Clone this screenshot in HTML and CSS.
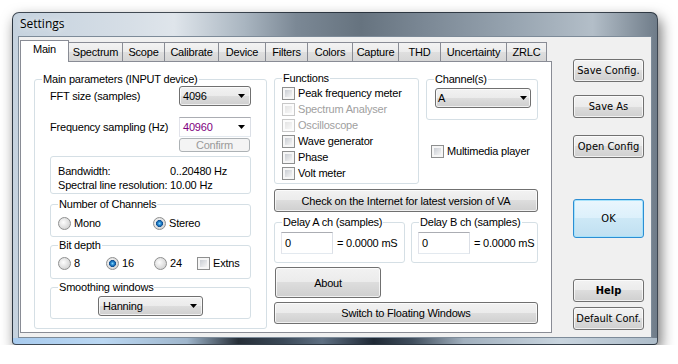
FILE: index.html
```html
<!DOCTYPE html>
<html lang="en">
<head>
    <meta charset="UTF-8">
    <meta name="viewport" content="width=device-width, initial-scale=1.0">
    <title>Settings</title>
    <link rel="stylesheet" href="styles.css">
</head>
<body>
    <div class="window">
        <div class="titlebar">Settings</div>
        <div class="client">
            <div class="tabarea">
                <div class="tabs">
                    <div class="tab active t-main">Main</div>
                    <div class="tab t-spectrum">Spectrum</div>
                    <div class="tab t-scope">Scope</div>
                    <div class="tab t-calibrate">Calibrate</div>
                    <div class="tab t-device">Device</div>
                    <div class="tab t-filters">Filters</div>
                    <div class="tab t-colors">Colors</div>
                    <div class="tab t-capture">Capture</div>
                    <div class="tab t-thd">THD</div>
                    <div class="tab t-unc">Uncertainty</div>
                    <div class="tab t-zrlc">ZRLC</div>
                </div>
                <div class="panel">
                    <fieldset class="group main-params">
                        <legend>Main parameters (INPUT device)</legend>
                        <div class="main-body">
                            <div class="param-row">
                                <span>FFT size (samples)</span>
                                <div class="combo look fft">
                                    <span>4096</span>
                                    <svg class="arrow" width="7" height="4" viewBox="0 0 7 4"><path d="M0 0h7L3.5 4z"/></svg>
                                </div>
                            </div>
                            <div class="param-row freq-row">
                                <span>Frequency sampling (Hz)</span>
                                <div class="combo edit fft">
                                    <span class="purple">40960</span>
                                    <svg class="arrow" width="7" height="4" viewBox="0 0 7 4"><path d="M0 0h7L3.5 4z"/></svg>
                                </div>
                            </div>
                            <div class="confirm-row">
                                <button class="btn disabled confirm">Confirm</button>
                            </div>
                            <div class="info-box">
                                <span>Bandwidth:</span><span>0..20480 Hz</span>
                                <span>Spectral line resolution:</span><span>10.00 Hz</span>
                            </div>
                            <fieldset class="group sub channels">
                                <legend>Number of Channels</legend>
                                <div class="opts ch-opts">
                                    <div class="opt w-mono"><span class="radio"></span>Mono</div>
                                    <div class="opt"><span class="radio on"></span>Stereo</div>
                                </div>
                            </fieldset>
                            <fieldset class="group sub bits">
                                <legend>Bit depth</legend>
                                <div class="opts bit-opts">
                                    <div class="opt w-bit"><span class="radio"></span>8</div>
                                    <div class="opt w-bit"><span class="radio on"></span>16</div>
                                    <div class="opt w-24"><span class="radio"></span>24</div>
                                    <div class="opt"><span class="chk"></span>Extns</div>
                                </div>
                            </fieldset>
                            <fieldset class="group sub smoothing">
                                <legend>Smoothing windows</legend>
                                <div class="smooth-body">
                                    <div class="combo look hanning">
                                        <span>Hanning</span>
                                        <svg class="arrow" width="7" height="4" viewBox="0 0 7 4"><path d="M0 0h7L3.5 4z"/></svg>
                                    </div>
                                </div>
                            </fieldset>
                        </div>
                    </fieldset>

                    <div class="middle">
                        <div class="top-row">
                            <fieldset class="group functions">
                                <legend>Functions</legend>
                                <div class="fn-body">
                                    <div class="opt fn"><span class="chk"></span>Peak frequency meter</div>
                                    <div class="opt fn off"><span class="chk dis"></span>Spectrum Analyser</div>
                                    <div class="opt fn off"><span class="chk dis"></span>Oscilloscope</div>
                                    <div class="opt fn"><span class="chk"></span>Wave generator</div>
                                    <div class="opt fn"><span class="chk"></span>Phase</div>
                                    <div class="opt fn"><span class="chk"></span>Volt meter</div>
                                </div>
                            </fieldset>
                            <div class="chan-col">
                                <fieldset class="group chan">
                                    <legend>Channel(s)</legend>
                                    <div class="chan-body">
                                        <div class="combo look chan-combo">
                                            <span>A</span>
                                            <svg class="arrow" width="7" height="4" viewBox="0 0 7 4"><path d="M0 0h7L3.5 4z"/></svg>
                                        </div>
                                    </div>
                                </fieldset>
                                <div class="opt multimedia"><span class="chk"></span>Multimedia player</div>
                            </div>
                        </div>
                        <button class="btn wide check">Check on the Internet for latest version of VA</button>
                        <div class="delay-row">
                            <fieldset class="group delay delay-a">
                                <legend>Delay A ch (samples)</legend>
                                <div class="delay-body">
                                    <div class="textbox">0</div>
                                    <span class="ms">= 0.0000 mS</span>
                                </div>
                            </fieldset>
                            <fieldset class="group delay delay-b">
                                <legend>Delay B ch (samples)</legend>
                                <div class="delay-body">
                                    <div class="textbox">0</div>
                                    <span class="ms">= 0.0000 mS</span>
                                </div>
                            </fieldset>
                        </div>
                        <button class="btn about">About</button>
                        <button class="btn wide switch">Switch to Floating Windows</button>
                    </div>
                </div>
            </div>

            <div class="side">
                <button class="btn sb">Save Config.</button>
                <button class="btn sb save-as">Save As</button>
                <button class="btn sb open">Open Config</button>
                <button class="btn sb ok">OK</button>
                <button class="btn sb help">Help</button>
                <button class="btn sb defaults">Default Conf.</button>
            </div>
        </div>
    </div>
</body>
</html>
```

FILE: styles.css
```css
body {
    margin: 0;
    background-color: #fff;
    font-family: "Liberation Sans", Arial, sans-serif;
    font-size: 11px;
    letter-spacing: -0.2px;
    color: #000;
}

/* window frame */
.window {
    box-sizing: border-box;
    width: 646px;
    height: 333px;
    margin: 12px 0 0 12px;
    padding: 0 5px 6px;
    border: 1px solid rgba(28, 36, 46, 0.8);
    border-radius: 7px 7px 4px 4px;
    background:
        linear-gradient(90deg, #a8cbee 0%, #bad7f2 14%, #9fb6cc 27%, #262e37 35%, #3b4958 42%, #5e6f82 48%, #1f2935 56%, #404e5d 62%, #a1b0be 70%, #c8d4de 85%, #aebdca 100%) left bottom / 100% 6px no-repeat,
        linear-gradient(90deg, #c5d2de 0%, #d6dee6 18%, #dfe5eb 25%, #a9b5c0 36%, #7b8895 44%, #66737f 54%, #7b8895 64%, #98a5b1 78%, #b3bec8 90%, #6f7c89 100%);
    box-shadow: 3px 6px 14px rgba(0, 0, 0, 0.55);
}

.titlebar {
    height: 23px;
    line-height: 21px;
    padding-left: 2px;
    font-family: "Open Sans", "Noto Sans", sans-serif;
    font-size: 12px;
    letter-spacing: 0;
    text-shadow: 0 0 6px rgba(255, 255, 255, 0.9);
}

.client {
    box-sizing: border-box;
    width: 634px;
    height: 302px;
    border: 1px solid #7d8b99;
    background-color: #f0f0f0;
    display: flex;
    padding: 3px 0 0 1px;
}

/* tabs */
.tabarea {
    width: 532px;
    display: flex;
    flex-direction: column;
}

.tabs {
    display: flex;
    align-items: flex-end;
    height: 21px;
}

.tab {
    box-sizing: border-box;
    height: 19px;
    margin-left: -1px;
    padding-top: 1px;
    line-height: 17px;
    text-align: center;
    border: 1px solid #898c95;
    border-bottom: none;
    background: linear-gradient(#f3f3f3, #ebebeb 50%, #dfdfdf 50%, #d6d6d6);
}

.tab.active {
    height: 22px;
    margin-left: 0;
    margin-bottom: -1px;
    padding-top: 0;
    background: #fff;
    position: relative;
    z-index: 1;
}

.t-main { width: 49px; }
.t-spectrum { width: 55px; }
.t-scope { width: 43px; }
.t-calibrate { width: 55px; }
.t-device { width: 48px; }
.t-filters { width: 43px; }
.t-colors { width: 46px; }
.t-capture { width: 47px; }
.t-thd { width: 43px; }
.t-unc { width: 67px; }
.t-zrlc { width: 41px; }

.panel {
    box-sizing: border-box;
    height: 272px;
    border: 1px solid #898c95;
    background-color: #fff;
    display: flex;
    align-items: flex-start;
    gap: 7px;
    padding: 10px 0 0 13px;
}

/* group boxes */
.group {
    margin: 0;
    padding: 0;
    min-width: 0;
    border: 1px solid #d5dfe5;
    border-radius: 3px;
}

.group legend {
    margin-left: 7px;
    padding: 0 1px;
    line-height: 13px;
}

.main-params {
    box-sizing: border-box;
    width: 233px;
    margin-top: 1px;
}

.main-body {
    padding: 0 15px 9px;
}

.param-row {
    display: flex;
    justify-content: space-between;
    align-items: center;
    height: 20px;
}

.freq-row {
    margin-top: 11px;
}

.confirm-row {
    display: flex;
    justify-content: flex-end;
    margin-top: 1px;
    padding-right: 1px;
}

.info-box {
    box-sizing: border-box;
    height: 38px;
    margin-top: 4px;
    padding: 8px 0 0 7px;
    border: 1px solid #d5dfe5;
    border-radius: 3px;
    display: grid;
    grid-template-columns: 112px auto;
    line-height: 12px;
    white-space: nowrap;
}

.sub {
    margin-top: 2px;
}

.channels {
    margin-top: 4px;
}

.opts {
    display: flex;
    padding-left: 7px;
}

.ch-opts {
    padding-top: 6px;
    padding-bottom: 6px;
}

.bit-opts {
    padding-top: 5px;
    padding-bottom: 8px;
}

.opt {
    display: flex;
    align-items: center;
    gap: 3px;
    height: 13px;
    line-height: 13px;
    white-space: nowrap;
}

.w-mono { width: 95px; }
.w-bit { width: 48px; }
.w-24 { width: 43px; }

.smooth-body {
    display: flex;
    justify-content: center;
    padding: 2px 0;
}

/* controls */
.combo {
    box-sizing: border-box;
    height: 20px;
    display: flex;
    align-items: center;
    justify-content: space-between;
    padding: 0 5px 0 3px;
    border-radius: 3px;
}

.combo.look {
    border: 1px solid #707070;
    background: linear-gradient(#f2f2f2, #ebebeb 50%, #dddddd 50%, #cfcfcf);
    box-shadow: inset 0 0 0 1px rgba(255, 255, 255, 0.7);
}

.combo.edit {
    border: 1px solid;
    border-color: #abadb3 #dbdfe6 #e3e9ef #e2e3ea;
    border-radius: 0;
    background-color: #fff;
}

.fft { width: 72px; }
.hanning { width: 105px; padding-left: 4px; }
.chan-combo { width: 96px; padding-left: 2px; padding-right: 3px; }

.arrow {
    flex: none;
    fill: #000;
}

.purple {
    color: #800080;
}

.chk {
    box-sizing: border-box;
    flex: none;
    width: 13px;
    height: 13px;
    padding: 2px;
    border: 1px solid #8e8f8f;
    background: linear-gradient(135deg, #c9cdd3, #f5f5f5) content-box, #f6f6f6;
}

.chk.dis {
    border-color: #c8c8c8;
    background: linear-gradient(135deg, #e4e4e4, #f8f8f8) content-box, #fcfcfc;
}

.radio {
    box-sizing: border-box;
    flex: none;
    width: 13px;
    height: 13px;
    border: 1px solid #8e8f8f;
    border-radius: 50%;
    background: radial-gradient(circle at 40% 40%, #fdfdfd, #d4d4d4 75%);
}

.radio.on {
    background:
        radial-gradient(circle, #8ad6f8 0, #2a8ed6 1.5px, #0f4f92 3.2px, rgba(15, 79, 146, 0) 3.8px),
        radial-gradient(circle at 40% 40%, #fdfdfd, #d4d4d4 75%);
}

.btn {
    box-sizing: border-box;
    display: flex;
    align-items: center;
    justify-content: center;
    padding: 0;
    border: 1px solid #707070;
    border-radius: 3px;
    background: linear-gradient(#f2f2f2, #ebebeb 50%, #dddddd 50%, #cfcfcf);
    box-shadow: inset 0 0 0 1px rgba(255, 255, 255, 0.7);
    font: inherit;
    letter-spacing: inherit;
    color: #000;
    white-space: nowrap;
}

.btn.disabled {
    border-color: #adb2b5;
    background: #f4f4f4;
    box-shadow: none;
    color: #9a9a9a;
}

.confirm {
    width: 71px;
    height: 14px;
}

/* middle column */
.middle {
    width: 264px;
    display: flex;
    flex-direction: column;
}

.top-row {
    display: flex;
    gap: 7px;
    height: 112px;
}

.functions {
    box-sizing: border-box;
    width: 145px;
    height: 112px;
}

.fn-body {
    padding: 0 0 2px 7px;
}

.fn {
    height: 16px;
}

.fn.off {
    color: #a0a0a0;
}

.chan-col {
    width: 112px;
}

.chan {
    box-sizing: border-box;
    margin-top: 1px;
}

.chan-body {
    padding: 2px 6px 11px 8px;
}

.multimedia {
    margin: 25px 0 0 5px;
}

.wide {
    width: 264px;
}

.check {
    height: 23px;
    margin-top: 5px;
}

.delay-row {
    display: flex;
    gap: 6px;
    margin-top: 4px;
}

.delay-a { width: 131px; }
.delay-b { width: 127px; }

.delay-body {
    display: flex;
    align-items: center;
    padding: 3px 0 8px 6px;
    white-space: nowrap;
}

.textbox {
    box-sizing: border-box;
    width: 52px;
    height: 22px;
    padding-left: 3px;
    line-height: 20px;
    border: 1px solid;
    border-color: #abadb3 #dbdfe6 #e3e9ef #e2e3ea;
    background-color: #fff;
}

.ms {
    margin-left: 4px;
}

.about {
    width: 106px;
    height: 31px;
    margin: 4px 0 0 1px;
}

.switch {
    height: 22px;
    margin-top: 4px;
}

/* right column */
.side {
    box-sizing: border-box;
    width: 99px;
    display: flex;
    flex-direction: column;
    padding: 19px 0 0 21px;
}

.sb {
    width: 71px;
    height: 23px;
    font-family: "DejaVu Sans Condensed", "DejaVu Sans", sans-serif;
    font-size: 11px;
    letter-spacing: 0;
}

.save-as { margin-top: 13px; }
.open { margin-top: 17px; }

.ok {
    height: 39px;
    margin-top: 41px;
    border-color: #2c8ed3;
    background: linear-gradient(#eaf6fd, #dcf0fb 50%, #cde8f6 50%, #c0e0f1);
    box-shadow: inset 0 0 0 1px #a6e2fb;
}

.help {
    margin-top: 41px;
    font-weight: bold;
}

.defaults { margin-top: 5px; }
```
